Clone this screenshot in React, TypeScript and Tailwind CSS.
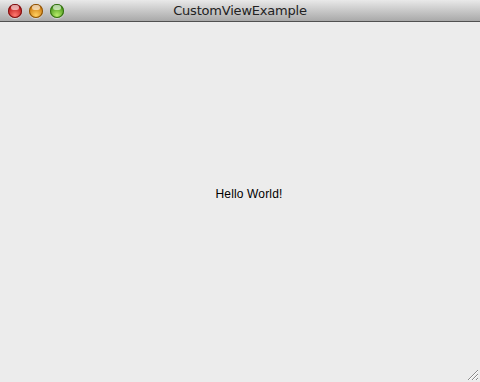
import React from "react";

const Light: React.FC<{ from: string; to: string; ring: string }> = ({ from, to, ring }) => (
  <div
    className="w-[14px] h-[14px] rounded-full"
    style={{
      background: `radial-gradient(circle at 50% 80%, ${to} 0%, ${from} 75%)`,
      boxShadow: `inset 0 0 0 1px ${ring}, 0 1px 1px rgba(255,255,255,0.5)`,
    }}
  >
    <div className="mx-auto mt-[1px] w-[8px] h-[5px] rounded-full bg-white/60" />
  </div>
);

const App: React.FC = () => {
  return (
    <div className="w-[480px] h-[382px] flex flex-col bg-[#ececec] overflow-hidden">
      {/* Title bar */}
      <div className="relative h-[22px] flex items-center bg-gradient-to-b from-[#e9e9e9] to-[#a9a9a9] border-b border-[#515151]">
        <div className="flex items-center gap-[7px] pl-[8px]">
          <Light from="#b51010" to="#ff7a70" ring="#7a1212" />
          <Light from="#c87208" to="#ffd060" ring="#8a5208" />
          <Light from="#3e9014" to="#b8ec6a" ring="#356e14" />
        </div>
        <div className="absolute inset-0 flex items-center justify-center text-[13px] text-[#222] font-['DejaVu_Sans',sans-serif] tracking-[-0.2px]">
          CustomViewExample
        </div>
      </div>

      {/* Content */}
      <div className="relative flex-1 flex items-center justify-center pb-[16px] pl-[18px]">
        <span className="text-[12px] text-black font-['Liberation_Sans',Arial,sans-serif] tracking-[0.15px]">
          Hello World!
        </span>
        <svg className="absolute right-[1px] bottom-[1px]" width="12" height="12" viewBox="0 0 12 12">
          <path d="M1 11 L11 1 M5 11 L11 5 M9 11 L11 9" stroke="#8a8a8a" strokeWidth="1" />
          <path d="M2 11 L11 2 M6 11 L11 6 M10 11 L11 10" stroke="#ffffff" strokeWidth="1" />
        </svg>
      </div>
    </div>
  );
};

export default App;
